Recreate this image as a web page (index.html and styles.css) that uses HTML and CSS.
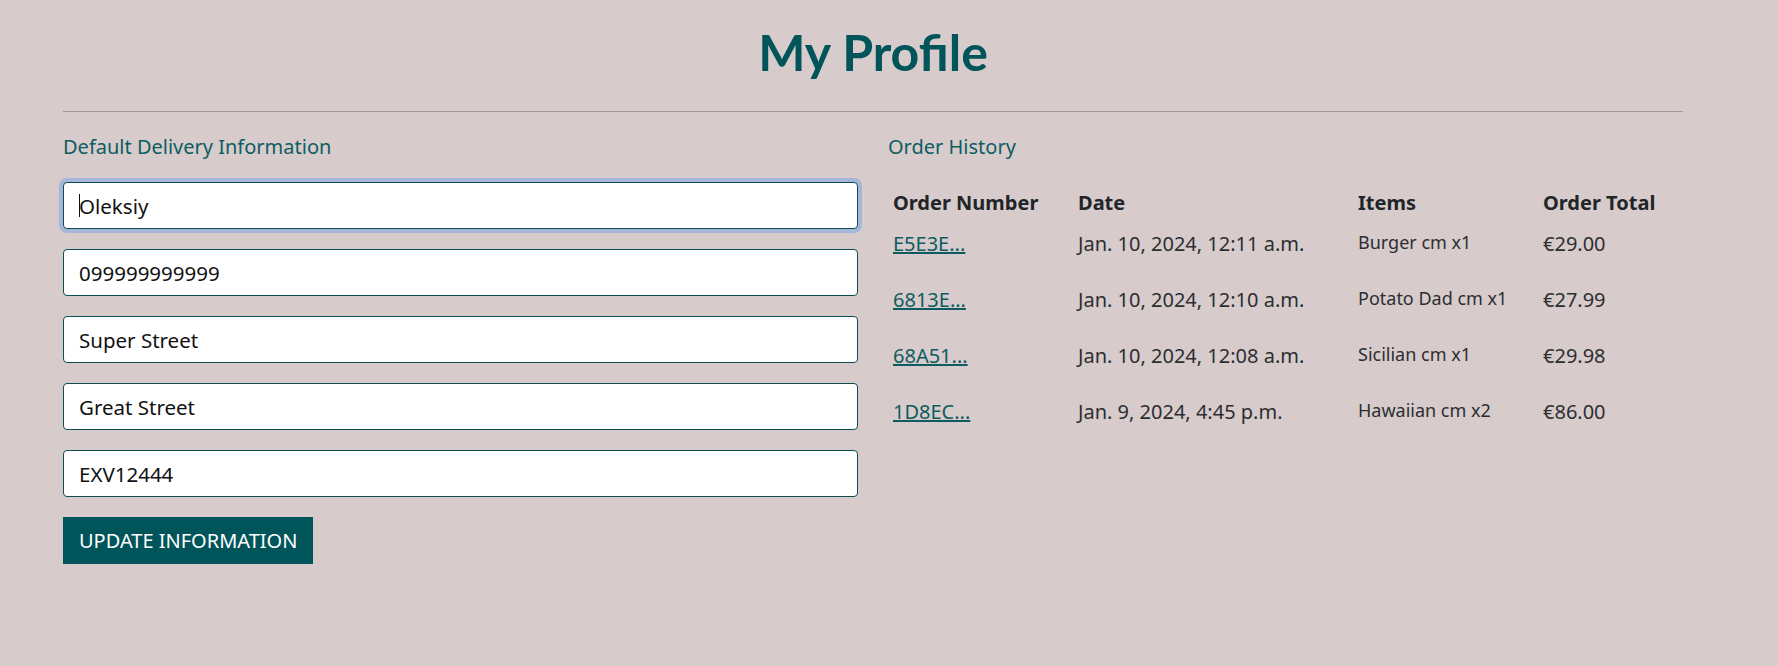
FILE: index.html
```html
<!DOCTYPE html>
<html lang="en">
<head>
<meta charset="utf-8">
<title>My Profile</title>
<link rel="stylesheet" href="styles.css">
</head>
<body>
<main class="page">
  <h1 class="title">My Profile</h1>
  <hr class="rule">
  <div class="columns">
    <section class="col">
      <p class="section-label">Default Delivery Information</p>
      <form class="profile-form">
        <div class="field focused">
          <input class="input" type="text" value="Oleksiy">
          <span class="caret"></span>
        </div>
        <div class="field"><input class="input" type="text" value="099999999999"></div>
        <div class="field"><input class="input" type="text" value="Super Street"></div>
        <div class="field"><input class="input" type="text" value="Great Street"></div>
        <div class="field"><input class="input" type="text" value="EXV12444"></div>
        <button class="btn" type="button">Update Information</button>
      </form>
    </section>
    <section class="col">
      <p class="section-label">Order History</p>
      <table class="orders">
        <thead>
          <tr>
            <th class="c-num">Order Number</th>
            <th class="c-date">Date</th>
            <th class="c-items">Items</th>
            <th class="c-total">Order Total</th>
          </tr>
        </thead>
        <tbody>
          <tr>
            <td><a href="#">E5E3E...</a></td>
            <td>Jan. 10, 2024, 12:11 a.m.</td>
            <td class="items">Burger cm x1</td>
            <td>€29.00</td>
          </tr>
          <tr>
            <td><a href="#">6813E...</a></td>
            <td>Jan. 10, 2024, 12:10 a.m.</td>
            <td class="items">Potato Dad cm x1</td>
            <td>€27.99</td>
          </tr>
          <tr>
            <td><a href="#">68A51...</a></td>
            <td>Jan. 10, 2024, 12:08 a.m.</td>
            <td class="items">Sicilian cm x1</td>
            <td>€29.98</td>
          </tr>
          <tr>
            <td><a href="#">1D8EC...</a></td>
            <td>Jan. 9, 2024, 4:45 p.m.</td>
            <td class="items">Hawaiian cm x2</td>
            <td>€86.00</td>
          </tr>
        </tbody>
      </table>
    </section>
  </div>
</main>
</body>
</html>
```

FILE: styles.css
```css
* { box-sizing: border-box; }

html, body {
  margin: 0;
  padding: 0;
  background: #d7cccb;
}

body {
  font-family: "Noto Sans", "Open Sans", sans-serif;
  color: #212529;
  font-size: 20px;
}

.page {
  width: 1620px;
  margin-left: 63px;
  padding-top: 23px;
}

.title {
  margin: 0;
  text-align: center;
  font-family: "Lato", sans-serif;
  font-weight: 700;
  font-size: 50px;
  line-height: 58px;
  color: #00545a;
}

.rule {
  margin: 30px 0 0;
  border: 0;
  border-top: 1px solid #a19a99;
  height: 0;
}

.columns {
  display: grid;
  grid-template-columns: 795px 795px;
  column-gap: 30px;
  padding-top: 23px;
}

.section-label {
  margin: 0 0 23px;
  font-size: 20px;
  line-height: 24px;
  color: #0d5d63;
}

.profile-form {
  display: flex;
  flex-direction: column;
  gap: 20px;
  align-items: flex-start;
}

.field {
  position: relative;
  width: 100%;
}

.input {
  display: block;
  width: 100%;
  height: 47px;
  padding: 0 15px;
  border: 1px solid #0b4f55;
  border-radius: 4px;
  background: #fff;
  font-family: "Noto Sans", sans-serif;
  font-size: 20.5px;
  color: #111;
  outline: none;
}

.focused .input {
  box-shadow: 0 0 0 4px #a5b6d9;
}

.caret {
  position: absolute;
  left: 16px;
  top: 12px;
  width: 1px;
  height: 23px;
  background: #111;
}

.btn {
  height: 47px;
  padding: 0 16px;
  border: 0;
  border-radius: 0;
  background: #00555a;
  color: #fff;
  font-family: "Noto Sans", sans-serif;
  font-size: 20px;
  text-transform: uppercase;
}

.orders {
  border-collapse: collapse;
  table-layout: fixed;
  width: 795px;
  margin-top: 29px;
  color: #2d2e32;
}

.orders th,
.orders td {
  text-align: left;
  vertical-align: top;
  padding: 0 5px;
  font-size: 20px;
  line-height: 30px;
}

.orders th {
  font-weight: 700;
  color: #212529;
  padding-bottom: 11px;
}

.orders td {
  padding-bottom: 26px;
}

.orders .c-num { width: 185px; }
.orders .c-date { width: 280px; }
.orders .c-items { width: 185px; }
.orders .c-total { width: 145px; }

.orders td.items {
  font-size: 18px;
  line-height: 27px;
}

.orders a {
  color: #0e5c61;
  text-decoration: underline;
}
```
